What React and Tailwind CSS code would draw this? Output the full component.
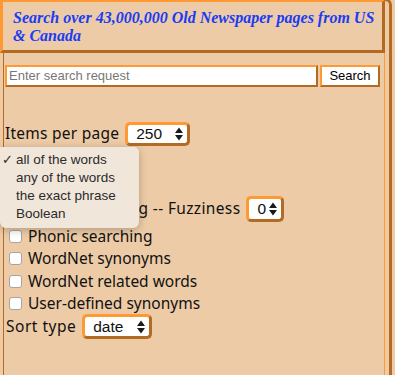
import React from "react";

const Arrows = () => (
  <svg width="8" height="14" viewBox="0 0 8 14" className="shrink-0">
    <polygon points="0,6 4,0.5 8,6" fill="#1a1a1a" />
    <polygon points="0,8 8,8 4,13.5" fill="#1a1a1a" />
  </svg>
);

const Select = ({ value, w, h = "h-[25px]" }) => (
  <div
    className={`${w} ${h} ml-[6px] flex items-center justify-between rounded-[5px] border-[3px] border-t-[#ff9933] border-l-[#ff9933] border-b-[#b36b24] border-r-[#b36b24] bg-white pl-[8px] pr-[4px] font-['Liberation_Sans',Arial,sans-serif] text-[15.5px] tracking-normal text-[#111]`}
  >
    <span>{value}</span>
    <Arrows />
  </div>
);

const Check = ({ label }) => (
  <div className="flex h-[22.5px] items-center">
    <span className="ml-[5px] h-[13px] w-[13px] rounded-[3px] border border-[#a5a5a5] bg-white" />
    <span className="ml-[6px]">{label}</span>
  </div>
);

export default function App() {
  return (
    <div className="relative flex h-[375px] w-[395px] overflow-hidden bg-[#edcba6]">
      <div className="relative z-10 flex w-[385px] flex-col">
        <div className="h-[53px] border-t-2 border-l-[3px] border-r-[3px] border-b-[3px] border-t-[#ff9933] border-l-[#ff9933] border-r-[#b36b24] border-b-[#b36b24] bg-[#edcba6] pl-[10px] pt-[7px] font-['Liberation_Serif',serif] text-[16px] font-bold italic leading-[18px] text-[#1b3cf5]">
          Search over 43,000,000 Old Newspaper pages from US &amp; Canada
        </div>
        <div className="ml-[3px] flex-1 border-l border-r border-l-[#b36b24] border-r-[#ff9933] font-['Noto_Sans',sans-serif] text-[15.5px] text-[#111]">
          <div className="mt-[12px] flex">
            <div className="ml-[1px] flex h-[22px] w-[313px] items-center border-2 border-t-[#ff9933] border-l-[#ff9933] border-b-[#b36b24] border-r-[#b36b24] bg-white pl-[2px] font-['Liberation_Sans',Arial,sans-serif] text-[13px] text-[#777]">
              Enter search request
            </div>
            <div className="ml-[2px] flex h-[22px] w-[60px] items-center justify-center border-2 border-t-[#ff9933] border-l-[#ff9933] border-b-[#b36b24] border-r-[#b36b24] bg-white font-['Liberation_Sans',Arial,sans-serif] text-[13px] text-black">
              Search
            </div>
          </div>
          <div className="mt-[35px] flex h-[24px] items-center pl-[1px]">
            <span className="tracking-[0.25px]">Items per page</span>
            <Select value="250" w="w-[65px]" h="h-[24px]" />
          </div>
          <div className="h-[50px]" />
          <div className="flex h-[26px] items-center">
            <span className="ml-[5px] h-[13px] w-[13px] rounded-[3px] border border-[#a5a5a5] bg-white" />
            <span className="ml-[6px] tracking-[0.35px]">Fuzzy searching -- Fuzziness</span>
            <Select value="0" w="w-[38px]" h="h-[26px]" />
          </div>
          <div className="mt-[3px]">
            <Check label="Phonic searching" />
            <Check label="WordNet synonyms" />
            <Check label="WordNet related words" />
            <Check label="User-defined synonyms" />
          </div>
          <div className="-mt-[1px] flex h-[25px] items-center pl-[2px]">
            <span className="tracking-[0.5px]">Sort type</span>
            <Select value="date" w="w-[70px]" h="h-[25px]" />
          </div>
        </div>
      </div>
      <div className="-ml-[1px] -mt-[2px] h-[380px] w-[8px] rounded-tr-[7px] border-t-[3px] border-r-[3px] border-[#b36b24]" />
      <div className="absolute left-0 top-[147px] z-20 h-[81px] w-[139px] rounded-b-[6px] rounded-tr-[5px] bg-[#f1e6da] pt-[4px] font-['Liberation_Sans',Arial,sans-serif] text-[13.5px] text-[#2b2b2b] shadow-[0_2px_8px_rgba(0,0,0,0.25)]">
        <div className="relative flex h-[18px] items-center pl-[16px]">
          <span className="absolute left-[2px] text-[13px]">✓</span>
          all of the words
        </div>
        <div className="flex h-[18px] items-center pl-[16px]">any of the words</div>
        <div className="flex h-[18px] items-center pl-[16px]">the exact phrase</div>
        <div className="flex h-[18px] items-center pl-[16px]">Boolean</div>
      </div>
    </div>
  );
}
